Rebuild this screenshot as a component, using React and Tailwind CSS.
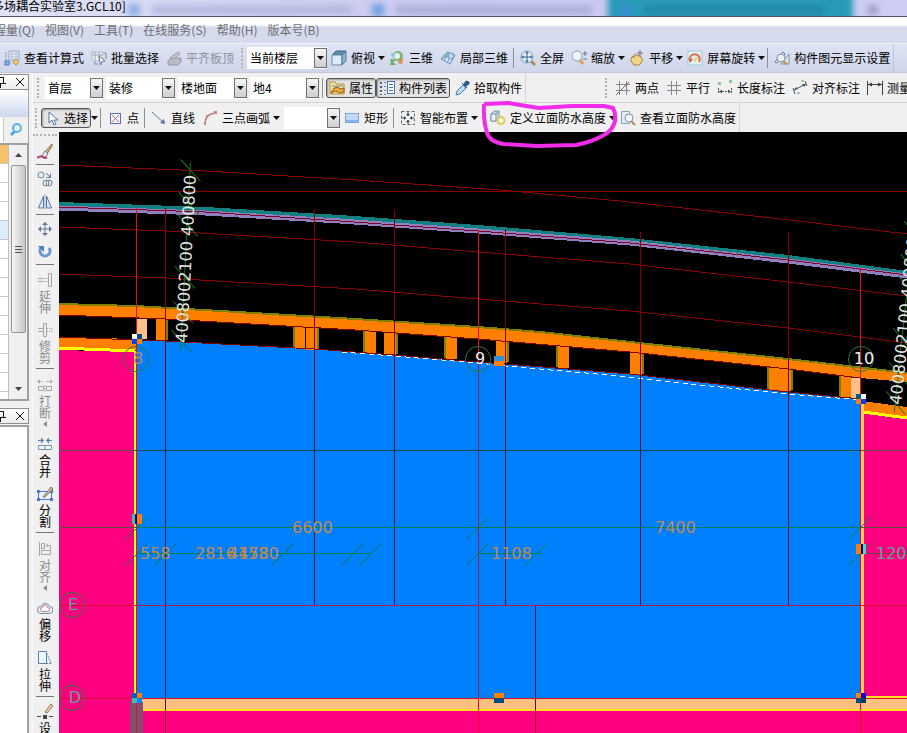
import React from 'react';
import clsx from 'clsx';

const menus = ['工程量(Q)', '视图(V)', '工具(T)', '在线服务(S)', '帮助(H)', '版本号(B)'];

/* 16x16 toolbar glyphs */
const icons = {
    formula: (
        <>
            <path d="M5 1h10v9H5z" fill="#e8eef8" stroke="#9aa8c4" />
            <path d="M5 4h10M5 7h10M8 1v9M12 1v9" stroke="#b0bcd0" />
            <path d="M2 2v11h5" fill="none" stroke="#808a9c" strokeDasharray="2 1" />
            <rect x="1" y="11" width="4" height="4" fill="#8fb4e8" stroke="#4b76b8" />
            <path d="M12 9l3 3-3 3-3-3z" fill="#f3c77d" stroke="#c08a30" />
        </>
    ),
    batch: (
        <>
            <path d="M1 2h10v9H1z" fill="#eef2f8" stroke="#9aa4b8" strokeDasharray="2 1" />
            <path d="M1 5h10M4 2v12M8 2v9" stroke="#9aa4b8" />
            <path d="M8 6l6 5-3 .5L9.500 15z" fill="#fff" stroke="#6c7a90" />
            <path d="M12 3h3v6M3 14h4" fill="none" stroke="#7b8aa6" />
        </>
    ),
    slab: (
        <>
            <path d="M2 11l4-3h9v4l-3 3H2z" fill="#b9bcc4" stroke="#9498a2" />
            <path d="M4 8l8-6 2 2-7 5z" fill="#c8cad0" stroke="#9498a2" />
        </>
    ),
    cube: (
        <>
            <path d="M1 5l4-4h10l-4 4z" fill="#5d8fae" stroke="#3d6685" />
            <path d="M1 5h10v10H1z" fill="#dcecf8" stroke="#6b8ba5" />
            <path d="M11 5l4-4v10l-4 4z" fill="#8fb4d0" stroke="#4f7896" />
        </>
    ),
    orbit: (
        <>
            <circle cx="9" cy="6" r="5" fill="#7ab87a" />
            <circle cx="8" cy="6" r="3" fill="#e8f2ea" />
            <path d="M1 9l6 1-3 2 3 3H1l1-3z" fill="#63ad5c" />
            <path d="M11 8l4 2-2 1 1 4-3-2-2 1z" fill="#d98d4a" />
            <circle cx="4" cy="5" r="2" fill="#8dc5e0" />
        </>
    ),
    local3d: (
        <>
            <path d="M1 9l6-7 8 3-5 9z" fill="#cfe3f3" stroke="#6c97bc" />
            <path d="M4 5.500l8 3.500M8 3l-4 8M12 4l-5 9M2 9l6-5" stroke="#6c97bc" fill="none" />
            <circle cx="11" cy="6" r="3" fill="#b8d5ec" stroke="#6c97bc" />
        </>
    ),
    fullscreen: (
        <>
            <path d="M11 11l4 4" stroke="#b9824a" strokeWidth="2.500" />
            <circle cx="7" cy="7" r="6" fill="#e6f1fa" stroke="#7291b0" />
            <path d="M7 2v10M2 7h10" stroke="#35649a" />
            <path d="M7 1.500l2 2H5zM7 12.500l2-2H5zM1.500 7l2-2v4zM12.500 7l-2-2v4z" fill="#35649a" />
        </>
    ),
    zoom: (
        <>
            <path d="M9 10l3 4" stroke="#dca050" strokeWidth="3" />
            <circle cx="6" cy="6" r="5" fill="#edf4fa" stroke="#8ba1b5" />
            <path d="M14 1v5M12 3.500h4M12 9h4" stroke="#5c7998" />
        </>
    ),
    pan: (
        <>
            <path d="M2 8l2-2 1 2V5l2-1 1 2 2-1 3 3v4l-3 3H5l-3-4z" fill="#f2d28b" stroke="#a88243" />
            <path d="M11 0v7M8 3h6" stroke="#5f6c7e" />
        </>
    ),
    rotateView: (
        <>
            <rect x="1" y="1" width="14" height="14" fill="#e4f4ec" stroke="#9dcbe0" />
            <path d="M3 8A5 5 0 1 1 12 12" fill="none" stroke="#dc6a58" strokeWidth="2" />
            <path d="M1 8l5 1-3 4z" fill="#d2604f" />
            <path d="M7 8l4-2v4l-4 2z" fill="#e5d38e" />
        </>
    ),
    display: (
        <>
            <path d="M7 14h8V4z" fill="#dce6f1" stroke="#7f93aa" />
            <path d="M1 12l8-10 2 2-8 9z" fill="#f0f4f8" stroke="#5e7794" />
            <circle cx="7" cy="8" r="4" fill="#e6f3fb" stroke="#7f93aa" />
            <path d="M9 11l4 3" stroke="#c88b3f" strokeWidth="2" />
        </>
    ),
    property: (
        <>
            <path d="M1 2h5l1 2h8v10H1z" fill="#fbe7a5" stroke="#b98b2d" />
            <path d="M3 6h11" stroke="#5f82b5" />
            <path d="M5 8l4-1 2 2 4-1v4l-5 1-3-2-5 2z" fill="#e8a33b" stroke="#9a5d13" />
        </>
    ),
    list: (
        <>
            <path d="M2 2v13" stroke="#3a5d94" strokeWidth="2" strokeDasharray="2 2" />
            <path d="M5 2.500h2M5 6.500h2M5 10.500h2M5 14.500h2" stroke="#6a86b0" />
            <rect x="8.500" y="1.500" width="7" height="12" fill="#fff" stroke="#4a76b8" />
            <path d="M10 4.500h4M10 7.500h4M10 10.500h4" stroke="#4a76b8" />
        </>
    ),
    pick: (
        <>
            <path d="M2 15l1-4 6-6 3 3-6 6z" fill="#bcdcf5" stroke="#4d7ba8" />
            <path d="M8 3l5 5M10 4l2-3 3 1v2l-3 2z" fill="#2f5d94" stroke="#2f5d94" />
        </>
    ),
    twoPoint: (
        <>
            <path d="M4.500 1v14M11.500 1v14M1 4.500h14M1 10.500h14" stroke="#8b8592" />
            <path d="M1 15L14 2" stroke="#775f66" />
        </>
    ),
    parallel: <path d="M5.500 1v14M10.500 1v14M1 5.500h14M1 10.500h14" stroke="#8b8592" />,
    lengthDim: (
        <>
            <path d="M1 2h3v3H1zM12 0h3v3h-3z" fill="#8cc79a" />
            <path d="M1.500 8v6M14.500 8v6M2 11.500h12" stroke="#4b5460" strokeDasharray="2 1" />
            <path d="M2 11.500l3-2v4zM14 11.500l-3-2v4z" fill="#4b5460" />
        </>
    ),
    alignDim: (
        <>
            <path d="M3 14L1 8M15 6l-2-5M2 10l12-6" stroke="#4b5460" />
            <path d="M2 10l4-1-2-2zM14 4l-4 0 2 3z" fill="#4b5460" />
            <path d="M5 12h3v2H5zM9 0h3v2H9z" fill="#9bd0a6" />
        </>
    ),
    measure: (
        <>
            <path d="M.5 1v14M15.500 1v14M1 4.500h14" stroke="#3c3c3c" />
            <path d="M1 4.500l4-2v4zM15 4.500l-4-2v4z" fill="#3c3c3c" />
        </>
    ),
    cursor: <path d="M5 2v11l3-3 2 5 2-1-2-4h4z" fill="#fff" stroke="#54779e" />,
    point: (
        <>
            <rect x="3.500" y="3.500" width="10" height="10" fill="#f4f4ff" stroke="#5b6fb5" />
            <path d="M5 5l7 7M12 5l-7 7" stroke="#b36f85" />
        </>
    ),
    line: (
        <>
            <path d="M1 2l12 11" stroke="#54779e" />
            <path d="M14 14l-5-1 4-4z" fill="#54779e" />
        </>
    ),
    arc: (
        <>
            <path d="M3 14Q3 4 13 3" fill="none" stroke="#b9757a" strokeWidth="1.500" />
            <path d="M2 12h2v3H2zM4 5h2v3H4zM12 1h3v3h-3z" fill="#c8858a" />
        </>
    ),
    rect: (
        <>
            <rect x="1.500" y="3.500" width="13" height="9" fill="#c1d8f8" stroke="#7f9fd5" />
            <path d="M2 10h12v2H2z" fill="#8cb1ec" />
        </>
    ),
    smart: (
        <>
            <path d="M1.500 1.500h13v13h-13z" fill="none" stroke="#5d6672" strokeDasharray="3 2" />
            <path d="M8 2v4M8 10v4M2 8h4M10 8h4" stroke="#333e50" />
            <path d="M8 6L6 4h4zM8 10l-2 2h4zM6 8L4 6v4zM10 8l2-2v4z" fill="#333e50" />
        </>
    ),
    waterproof: (
        <>
            <path d="M1 4l3-3h5v7l-3 3H1z" fill="#c5dbea" stroke="#7893a9" />
            <path d="M1 4h5v7H1zM6 4l3-3" fill="#eaf3f9" stroke="#7893a9" />
            <circle cx="11" cy="10.500" r="3.500" fill="#fffbe0" stroke="#dccb5c" strokeWidth="2" />
        </>
    ),
    viewHeight: (
        <>
            <path d="M1.500 1.500h8v12h-8z" fill="#e1ebf3" stroke="#8ba4b8" />
            <path d="M11 11l4 4" stroke="#b58a4c" strokeWidth="2" />
            <circle cx="9" cy="8" r="4" fill="#f2f8fc" stroke="#7e92a6" />
        </>
    ),
    brush: (
        <>
            <path d="M15 0L8 8l2 2 5-8z" fill="#d8b477" stroke="#8b6b45" />
            <path d="M8 7l3 3-3 3H4z" fill="#e8edf4" stroke="#6f7d92" />
            <path d="M0 14q4-3 6-1t4 0" fill="none" stroke="#b04a72" strokeWidth="2" />
        </>
    ),
    copy: (
        <>
            <circle cx="4" cy="4" r="3" fill="#e4eef7" stroke="#6d8aa8" />
            <circle cx="9" cy="12" r="3" fill="none" stroke="#6d7c8c" />
            <circle cx="12" cy="12" r="3" fill="none" stroke="#6d7c8c" />
            <path d="M9 2l4 4M13.500 2.500V6.500H9.500" fill="none" stroke="#4f78a8" />
        </>
    ),
    mirror: (
        <>
            <path d="M6.500 2v12h-5zM9.500 2v12h5z" fill="#dce9f6" stroke="#58789e" />
            <path d="M8 0v16" stroke="#9ab0c8" />
        </>
    ),
    move: (
        <>
            <path d="M8 2v12M2 8h12" stroke="#5f7896" />
            <path d="M8 1l3 3H5zM8 15l3-3H5zM1 8l3-3v6zM15 8l-3-3v6z" fill="#5f7896" />
        </>
    ),
    rotate: (
        <>
            <path d="M12 4A5 5 0 1 1 4 4" fill="none" stroke="#6c96d0" strokeWidth="3" />
            <path d="M1 2h6v6z" fill="#4d7ec0" />
        </>
    ),
    extend: (
        <>
            <path d="M11.500 1.500h3v13h-3z" fill="#eee" stroke="#a5a5a5" />
            <path d="M1 6.500h5M1 9.500h5" stroke="#a5a5a5" />
            <path d="M6 6.500h5M6 9.500h5" stroke="#a5a5a5" strokeDasharray="1 1" />
        </>
    ),
    trim: (
        <>
            <path d="M6.500 1.500h3v13h-3z" fill="#eee" stroke="#a5a5a5" />
            <path d="M1 6.500h6M1 9.500h6" stroke="#a5a5a5" />
            <path d="M10 6.500h5v3h-5" fill="none" stroke="#a5a5a5" strokeDasharray="1 1" />
        </>
    ),
    breakUp: (
        <>
            <path d="M1.500 9.500h5v4h-5zM9.500 9.500h5v4h-5z" fill="#eee" stroke="#a5a5a5" />
            <path d="M2 4.500h4M10 4.500h4M8 8v7" stroke="#a5a5a5" strokeDasharray="2 1" />
            <path d="M0 4.500l3-2v4zM16 4.500l-3-2v4z" fill="#a5a5a5" />
        </>
    ),
    merge: (
        <>
            <path d="M1.500 9.500h13v4h-13z" fill="#f2f6fa" stroke="#7a8fa8" />
            <path d="M8 9.500v4" stroke="#7a8fa8" />
            <path d="M1 4.500h5M10 4.500h5" stroke="#5882b8" />
            <path d="M7 4.500l-3-3v6zM9 4.500l3-3v6z" fill="#5882b8" />
        </>
    ),
    split: (
        <>
            <path d="M1.500 5.500h13v8h-13z" fill="#eef4ff" stroke="#5074d0" />
            <path d="M0 4h3v3H0zM0 12h3v3H0zM13 12h3v3h-3zM13 4h3v3h-3z" fill="#5074d0" />
            <path d="M6 11l8-10 2 2-8 8z" fill="#d9bd88" stroke="#777" />
        </>
    ),
    alignTo: (
        <>
            <path d="M2.500 1v14M4.500 2.500v5h3v-5z" fill="#eee" stroke="#a5a5a5" />
            <path d="M4.500 9.500h9v4h-9zM13.500 9V4.500h-4M11 2.500l-2 2 2 2" fill="none" stroke="#a5a5a5" />
        </>
    ),
    offset: (
        <>
            <path d="M4 13.500a3.500 3.500 0 0 1 0-7 4.500 4.500 0 0 1 8.500 0 3.500 3.500 0 0 1 0 7z" fill="#eaf0f6" stroke="#6e89a6" />
            <path d="M5.500 11.500a2 2 0 0 1 0-4 2.500 2.500 0 0 1 5 0 2 2 0 0 1 0 4z" fill="#fff" stroke="#c77b82" />
        </>
    ),
    stretch: (
        <>
            <path d="M9.500 13.500h-8v-12h8z" fill="#edf5fc" stroke="#5b83a8" />
            <path d="M9.500 3l5 10.500h-5" fill="none" stroke="#5b83a8" strokeDasharray="2 1" />
        </>
    ),
    grip: (
        <>
            <path d="M0 12.500h16" stroke="#444" strokeDasharray="4 2" />
            <path d="M6 11h4v4H6z" fill="#444" />
            <path d="M8 8l6-8 2 2-6 7z" fill="#e5d3a2" stroke="#9a7050" />
        </>
    ),
};

function Icon({ name }) {
    return (
        <svg viewBox="0 0 16 16" className="size-4 shrink-0" fill="none" aria-hidden="true">
            {icons[name]}
        </svg>
    );
}

function Caret({ className }) {
    return (
        <svg viewBox="0 0 7 4" className={clsx('w-[7px] h-1 shrink-0', className)} aria-hidden="true">
            <path d="M0 0h7L3.500 4z" fill="#111" />
        </svg>
    );
}

function Tool({ icon, label, caret, pressed, disabled, children }) {
    return (
        <button
            type="button"
            disabled={disabled}
            className={clsx(
                'relative flex items-center gap-1 shrink-0 whitespace-nowrap h-5',
                pressed ? 'border border-[#555] rounded-[3px] bg-[#e4e4e4] shadow-[inset_1px_1px_2px_#999] px-[2px]' : 'pl-1',
                !pressed && !caret && 'pr-[3px]',
                disabled ? 'text-[#8b90a0]' : 'text-black'
            )}
        >
            <Icon name={icon} />
            {label}
            {caret && <Caret className="-ml-px" />}
            {children}
        </button>
    );
}

function Combo({ label, value, className }) {
    return (
        <div className={clsx('relative shrink-0 h-[22px] bg-white', className)}>
            <select aria-label={label} defaultValue={value} className="appearance-none w-full h-full pl-[3px] pr-4 bg-transparent outline-none">
                <option>{value}</option>
            </select>
            <span className="absolute right-0 top-px w-[13px] h-5 border border-[#707070] bg-linear-to-b from-[#f6f6f6] to-[#cfcfcf] flex items-center justify-center pointer-events-none">
                <Caret />
            </span>
        </div>
    );
}

const Divider = () => <span className="w-px h-5 mx-[2px] bg-[#8b8f98] shrink-0" />;
const Grip = ({ className = 'mx-1' }) => <span className={clsx('h-5 border-l-2 border-dotted border-[#b4b4b8] shrink-0', className)} />;

function TitleBar() {
    return (
        <header className="relative h-4 shrink-0 overflow-hidden bg-linear-to-r from-[#dfe3f4] via-[#c9c8f0] to-[#cdccf4]">
            <div className="absolute inset-0 flex items-center blur-[3px] pl-[128px] pt-1">
                <span className="size-3 shrink-0 bg-[#8fb0e4] mr-3" />
                <span className="h-2 w-[200px] shrink-0 bg-[#b2b6de]" />
                <span className="size-3 shrink-0 bg-[#6f9fe4] ml-5 mr-3" />
                <span className="h-2 w-[196px] shrink-0 bg-[#a8aeda]" />
                <span className="h-8 w-[245px] shrink-0 ml-4 bg-[#279bb8] flex items-center pl-3">
                    <span className="size-3 bg-[#3a8fd0] mr-3" />
                    <span className="h-2 w-[180px] bg-[#2286a4]" />
                </span>
                <span className="size-2 shrink-0 ml-4 bg-[#8f8db8]" />
            </div>
            <h1 className="relative -ml-2 text-xs leading-3 whitespace-nowrap">多场耦合实验室3.GCL10]</h1>
        </header>
    );
}

function PanelHeader() {
    return (
        <div className="h-4 shrink-0 border border-l-0 border-[#8f8f8f] bg-linear-to-b from-white to-[#ececec] flex items-center justify-end gap-2 pr-1">
            <button type="button" aria-label="固定" className="w-2 h-3">
                <svg viewBox="0 0 8 12" className="w-2 h-3">
                    <path d="M0 1.500h4M3.500 1v6M0 7.500h6M.5 8v4" stroke="#111" fill="none" />
                </svg>
            </button>
            <button type="button" aria-label="关闭" className="size-2">
                <svg viewBox="0 0 8 8" className="size-2">
                    <path d="M0 0l8 8M8 0L0 8" stroke="#111" fill="none" />
                </svg>
            </button>
        </div>
    );
}

const rowColors = ['bg-[#f5c26b]', '', '', '', 'bg-[#dcecfb]', '', '', '', '', '', '', '', ''];

function SidePanel() {
    return (
        <aside className="w-[29px] shrink-0 flex flex-col pt-px bg-[#f0f0f0]">
            <PanelHeader />
            <div className="h-[27px] shrink-0 border-r border-[#a8a8a8] bg-linear-to-b from-white via-[#e6ecf8] to-[#ccd8ee]" />
            <div className="h-[26px] shrink-0 flex items-center border-r border-[#a8a8a8]">
                <input aria-label="搜索" className="w-1 h-6 bg-white border-r border-[#c4c4c4] outline-none" />
                <button type="button" aria-label="查找" className="ml-1 size-4">
                    <svg viewBox="0 0 16 16" className="size-4">
                        <path d="M3 13l4-4" stroke="#4a9fdc" strokeWidth="2.500" />
                        <circle cx="9" cy="6" r="4" fill="#e4f4fe" stroke="#5cb0e6" strokeWidth="2" />
                    </svg>
                </button>
            </div>
            <div className="h-[258px] shrink-0 flex border-r-2 border-y-2 border-[#a0a0a0] bg-white overflow-hidden">
                <div className="w-[9px] border-r border-[#c0c0c0]">
                    {rowColors.map((color, index) => (
                        <div key={index} className={clsx('h-[19px] border-b border-[#c8c8c8]', color)} />
                    ))}
                </div>
                <div className="flex-1 flex flex-col items-center bg-[#f0f0f0]">
                    <svg viewBox="0 0 7 4" className="w-[7px] h-1 my-2"><path d="M0 4h7L3.500 0z" fill="#444" /></svg>
                    <div className="w-[15px] h-[168px] rounded-xs border border-[#959595] bg-linear-to-r from-[#f6f6f6] to-[#c6c6c6] flex flex-col items-center justify-center gap-[2px]">
                        <span className="w-[7px] h-px bg-[#555]" />
                        <span className="w-[7px] h-px bg-[#555]" />
                        <span className="w-[7px] h-px bg-[#555]" />
                    </div>
                    <svg viewBox="0 0 7 4" className="w-[7px] h-1 mt-auto mb-2"><path d="M0 0h7L3.500 4z" fill="#444" /></svg>
                </div>
            </div>
            <div className="h-[7px] shrink-0" />
            <PanelHeader />
            <div className="flex-1 mt-px border-r-2 border-t-2 border-[#a0a0a0] bg-white" />
        </aside>
    );
}

const editTools = [
    [{ icon: 'brush', name: '格式刷' }],
    [{ icon: 'copy', name: '复制' }, { icon: 'mirror', name: '镜像' }],
    [{ icon: 'move', name: '移动' }, { icon: 'rotate', name: '旋转' }],
    [{ icon: 'extend', label: '延伸', disabled: true }, { icon: 'trim', label: '修剪', disabled: true }],
    [{ icon: 'breakUp', label: '打断', disabled: true, caret: true }, { icon: 'merge', label: '合并' }, { icon: 'split', label: '分割' }],
    [{ icon: 'alignTo', label: '对齐', disabled: true, caret: true }, { icon: 'offset', label: '偏移' }, { icon: 'stretch', label: '拉伸' }],
    [{ icon: 'grip', label: '设' }],
];

function EditBar() {
    return (
        <nav className="w-[26px] shrink-0 overflow-hidden bg-[#f0f0f0] flex flex-col items-center pr-[2px] pt-[2px]">
            <span className="w-6 mb-1 border-t-2 border-dotted border-[#b4b4b8] shrink-0" />
            {editTools.map((group, index) => (
                <React.Fragment key={index}>
                    {index > 0 && <span className="w-[18px] h-px mt-px mb-[2px] bg-[#777] shrink-0" />}
                    {group.map((tool) => (
                        <button
                            key={tool.icon}
                            type="button"
                            aria-label={tool.name}
                            disabled={tool.disabled}
                            className={clsx(
                                'flex flex-col items-center shrink-0',
                                !tool.label && 'h-[23px] justify-center',
                                tool.label && (tool.caret ? 'h-[60px] pt-[6px]' : 'h-[50px] pt-[5px]'),
                                tool.disabled ? 'text-[#8a8a8a]' : 'text-black'
                            )}
                        >
                            <Icon name={tool.icon} />
                            {tool.label && <span className="w-3 mt-[2px] leading-3 text-xs break-all">{tool.label}</span>}
                            {tool.caret && (
                                <svg viewBox="0 0 4 6" className="w-1 h-[6px] mt-[2px]"><path d="M4 0v6L0 3z" fill="#8a8a8a" /></svg>
                            )}
                        </button>
                    ))}
                </React.Fragment>
            ))}
        </nav>
    );
}

/* piers between the two facade walls: [x, top, width, bottom, side of the olive edge] */
const piers = [
    [156, 319, 10, 341, 'r'],
    [295, 326, 10, 348, 'l'],
    [306, 327, 11, 350, 'r'],
    [365, 331, 11, 353, 'l'],
    [384, 332, 12, 355, 'r'],
    [446, 337, 11, 359, 'l'],
    [496, 341, 11, 363, 'r'],
    [558, 346, 11, 368, 'l'],
    [630, 353, 12, 375, 'r'],
    [769, 367, 10, 390, 'l'],
    [779, 368, 12, 391, 'r'],
    [841, 375, 10, 398, 'l'],
];

const redCurves = [
    'M59 165L205 171L355 180L500 190L620 201L790 220L907 234',
    'M59 191.500H907',
    'M59 227L165 231L355 242L478 252L630 264L788 282L907 296',
    'M59 274L165 278L355 289L478 299L630 311L788 328L907 343',
];

const darkAxes = [
    [165, 208, 733],
    [314, 209, 605],
    [394, 210, 605],
    [505, 229, 605],
    [640, 232, 605],
    [788, 232, 605],
    [535, 605, 733],
];

const ticks = [
    [137, 527], [478, 527], [860, 527], [137, 553], [166, 553], [283, 553], [353, 553], [371, 553], [478, 553], [536, 553], [860, 553],
];

/* selection grips: centre and the four quadrant colours */
const handles = [
    [137, 339, '#fff', '#004c80', '#0040ff', '#ff8000'],
    [137, 519, '#40c0a0', '#ff8000', '#40c0a0', '#ff8000'],
    [137, 698, '#0060c0', '#ff8000', '#40c0b0', '#0080ff'],
    [499, 361, '#3090e0', '#3090e0', '#ff8000', '#ff8000'],
    [499, 698, '#ff8000', '#ff8000', '#004c80', '#004c80'],
    [861, 399, '#005c80', '#fff', '#ff8000', '#0040ff'],
    [861, 549, '#ff8000', '#40e0c0', '#ff8000', '#40e0c0'],
    [861, 698, '#ff8000', '#0000d0', '#004c80', '#003c60'],
];

function Bubble({ x, y, label, tx, fill }) {
    return (
        <g>
            <circle cx={x} cy={y} r="12.500" fill="none" stroke="#2c7838" />
            <text x={tx} y={y + 5} fill={fill} textAnchor="middle">{label}</text>
        </g>
    );
}

function ElevationDims({ x, y, angle }) {
    return (
        <g transform={`translate(${x} ${y}) rotate(${angle})`} fill="#e4e4e4">
            <path d="M-8 -6H180" stroke="#1a7a1a" />
            {[0, 29, 64, 116, 138, 171].map((d) => (
                <path key={d} d={`M${d - 9} 5L${d + 12} -16`} stroke="#1a7a1a" />
            ))}
            <text x="0" y="0">4008002100 400800</text>
        </g>
    );
}

function Drawing() {
    return (
        <svg
            viewBox="59 132 848 601"
            preserveAspectRatio="xMinYMin slice"
            className="block w-full h-full bg-black font-['DejaVu_Sans',sans-serif] text-[16px]"
            role="img"
            aria-label="平面图"
        >
            <g shapeRendering="crispEdges">
                <path d="M59 350L136 352V733H59zM863 413L907 419V733H863z" fill="#ff0080" />
                <path d="M136 710H907V733H136z" fill="#ff0080" />
                <path d="M136 339L165 341L314 349L394 355L478 362L505 364L630 374L788 392L861 399V698H136z" fill="#0080ff" />
                <path d="M136 699H907V709H136z" fill="#ffc080" />
                <path d="M136 710H907M866 697H907" stroke="#ffe020" strokeWidth="2" fill="none" />

                {/* axis grid */}
                <g fill="none" stroke="#8a0000">
                    {redCurves.map((d) => <path key={d} d={d} />)}
                </g>

                {/* outer slab edge */}
                <path d="M59 204L205 209L340 217L478 227L630 240L788 257L907 273" fill="none" stroke="#108080" strokeWidth="4" />
                <path d="M59 208L205 213L340 221L478 231L630 243L788 261L907 276" fill="none" stroke="#9080c0" strokeWidth="5" />
                <path d="M59 207L205 212L340 221L478 231L630 243L788 260L907 275" fill="none" stroke="#800020" />

                {/* facade walls */}
                <path d="M59 303L136 305L355 318L478 326L540 331L630 341L788 358L907 372V382L860 378L788 369L630 352L478 339L355 330L165 319L59 315z" fill="#ff8000" />
                <path d="M59 304L136 306L355 319L478 327L540 332L630 342L788 359L907 373" fill="none" stroke="#808000" strokeWidth="2" />
                <path d="M59 337L136 339V350L59 347zM862 401L907 407V417L862 411z" fill="#ff8000" />
                <path d="M59 348L135 351M863 412L907 418" stroke="#ffff00" strokeWidth="3" />
                {piers.map(([x, top, w, bottom, side]) => (
                    <g key={x}>
                        <path d={`M${x} ${top}h${w}V${bottom}h${-w}z`} fill="#ff8000" />
                        <path d={`M${side === 'l' ? x - 1 : x + w + 1} ${top}V${bottom - 1}`} stroke="#808000" strokeWidth="2" />
                    </g>
                ))}
                <path d="M137 319h10v20h-10zM851 378h9v20h-9z" fill="#ffc08c" />
                <path d="M59 315L165 319L355 330L478 339L630 352L788 369L860 378" fill="none" stroke="#800000" />
                <path d="M59 337L165 341L314 349L394 355L478 362L505 364L630 374L788 392L861 399" fill="none" stroke="#800000" />
                <path d="M342 352L394 356L478 363L505 366L620 376L700 385L788 394L861 400" fill="none" stroke="#fff" strokeDasharray="5 4" />

                <path d="M135 351V698" stroke="#ffff00" strokeWidth="2" />
                <path d="M862 403V698" stroke="#ffd060" strokeWidth="3" />
                <path d="M130 702h13V733h-13z" fill="#80506c" />

                {/* axes */}
                {darkAxes.map(([x, from, to]) => (
                    <g key={x}>
                        <path d={`M${x + 0.5} ${from}V${to}`} stroke="#800000" />
                        <path d={`M${x + 0.5} ${Math.max(from, 400)}V${Math.min(to, 698)}`} stroke="#481038" />
                    </g>
                ))}
                <path d="M136.500 208V733M478.500 230V733M860.500 268V733" stroke="#e01020" />
                <path d="M478.500 364V697" stroke="#a01c48" />
                <path d="M59 450.500H907M59 527.500H907" stroke="#604c40" />
                <path d="M137 450.500H861" stroke="#104850" />
                <path d="M137 527.500H861M137 553.500H371M478 553.500H541" stroke="#008050" />
                <path d="M862 553.500H907" stroke="#604c40" />
                <path d="M59 605.500H907M59 698.500H907" stroke="#d81030" />
                <path d="M137 605.500H861" stroke="#b01c48" />
            </g>

            {ticks.map(([x, y]) => (
                <path key={`${x}-${y}`} d={`M${x - 11} ${y + 12}L${x + 11} ${y - 10}`} stroke="#00803c" />
            ))}

            <g fill="#c08850">
                <text x="292" y="533">6600</text>
                <text x="655" y="533">7400</text>
                <text x="140" y="559">558</text>
                <text x="195" y="559">2816</text>
                <text x="228" y="559">4458</text>
                <text x="238" y="559">1730</text>
                <text x="491" y="559">1108</text>
                <text x="876" y="559" fill="#60a098">1200</text>
            </g>

            <Bubble x={136} y={359} label="8" tx={138} fill="#b08868" />
            <Bubble x={478} y={359} label="9" tx={480} fill="#f0f0f0" />
            <Bubble x={861} y={359} label="10" tx={864} fill="#f0f0f0" />
            <Bubble x={72} y={605} label="E" tx={73} fill="#60a098" />
            <Bubble x={72} y={698} label="D" tx={75} fill="#60a098" />

            <ElevationDims x={187} y={343} angle={-87} />
            <ElevationDims x={901} y={405} angle={-84} />

            {handles.map(([x, y, a, b, c, d]) => (
                <g key={`${x}-${y}`} shapeRendering="crispEdges">
                    <rect x={x - 5} y={y - 5} width="5" height="5" fill={a} />
                    <rect x={x} y={y - 5} width="5" height="5" fill={b} />
                    <rect x={x - 5} y={y} width="5" height="5" fill={c} />
                    <rect x={x} y={y} width="5" height="5" fill={d} />
                </g>
            ))}
            <path d="M135 514h2v10h-2zM861 544h2v10h-2z" fill="#0000a0" />
        </svg>
    );
}

export default function App() {
    return (
        <div className="h-screen flex flex-col overflow-hidden bg-[#f0f0f0] text-xs text-black font-['Noto_Sans_CJK_SC',sans-serif]">
            <TitleBar />
            <nav className="h-[27px] shrink-0 border-t border-[#4c5470] bg-linear-to-b from-white from-30% to-[#d5dbec] to-40% flex items-center gap-[10px] overflow-hidden text-[#6d6d72]">
                {menus.map((menu, index) => (
                    <button key={menu} type="button" className={clsx('shrink-0 whitespace-nowrap', index === 0 && '-ml-[18px]')}>
                        {menu}
                    </button>
                ))}
            </nav>

            <div className="h-[30px] shrink-0 border-y border-t-[#eef1f9] border-b-[#c3c9da] bg-linear-to-b from-[#dfe4f3] to-[#cfd6ea] flex items-center overflow-hidden">
                <Tool icon="formula" label="查看计算式" />
                <Tool icon="batch" label="批量选择" />
                <Tool icon="slab" label="平齐板顶" disabled />
                <Grip />
                <Combo label="楼层范围" value="当前楼层" className="w-20" />
                <Tool icon="cube" label="俯视" caret />
                <Tool icon="orbit" label="三维" />
                <Tool icon="local3d" label="局部三维" />
                <Divider />
                <Tool icon="fullscreen" label="全屏" />
                <Tool icon="zoom" label="缩放" caret />
                <Tool icon="pan" label="平移" caret />
                <Tool icon="rotateView" label="屏幕旋转" caret />
                <Divider />
                <Tool icon="display" label="构件图元显示设置" />
                <span className="h-full border-l border-[#bcc4d8]" />
            </div>

            <div className="flex-1 min-h-0 flex">
                <SidePanel />
                <main className="flex-1 min-w-0 flex flex-col ml-[3px] border-l border-[#fafafa]">
                    <div className="h-[30px] shrink-0 border-b border-[#d4d4d4] flex items-center overflow-hidden">
                        <Grip />
                        <div className="flex gap-[3px] shrink-0 pl-[2px]">
                            <Combo label="楼层" value="首层" className="w-[58px]" />
                            <Combo label="构件类型" value="装修" className="w-[69px]" />
                            <Combo label="构件" value="楼地面" className="w-[69px]" />
                            <Combo label="名称" value="地4" className="w-[69px]" />
                        </div>
                        <span className="w-px h-5 mx-[3px] bg-[#8b8f98] shrink-0" />
                        <Tool icon="property" label="属性" pressed />
                        <Tool icon="list" label="构件列表" pressed />
                        <Tool icon="pick" label="拾取构件" />
                        <span className="w-[76px] h-full border-l border-[#d4d4d4] shrink-0" />
                        <Grip />
                        <Tool icon="twoPoint" label="两点" />
                        <Tool icon="parallel" label="平行" />
                        <Tool icon="lengthDim" label="长度标注" />
                        <Tool icon="alignDim" label="对齐标注" />
                        <Tool icon="measure" label="测量距离" />
                    </div>
                    <div className="h-[29px] shrink-0 flex items-center">
                        <Grip className="ml-[2px] mr-1" />
                        <Tool icon="cursor" label="选择" pressed />
                        <button type="button" aria-label="选择方式"><Caret /></button>
                        <Divider />
                        <Tool icon="point" label="点" />
                        <Divider />
                        <Tool icon="line" label="直线" />
                        <Tool icon="arc" label="三点画弧" caret />
                        <Combo label="画弧方式" value="" className="w-14 ml-1" />
                        <Tool icon="rect" label="矩形" />
                        <Divider />
                        <Tool icon="smart" label="智能布置" caret />
                        <span className="w-2 shrink-0" />
                        <Tool icon="waterproof" label="定义立面防水高度" caret>
                            {/* hand-drawn marker round the command */}
                            <svg viewBox="0 0 140 52" className="absolute -left-1 -top-2 w-[140px] h-[52px] z-10 pointer-events-none" aria-hidden="true">
                                <path
                                    d="M2 4L26 3L38 5L57 8L90 6L122 6L131 8Q134 14 133 21Q131 30 122 35Q110 42 94 45L55 46L22 44Q8 42 5 33Q1 20 2 4"
                                    fill="none"
                                    stroke="#f02ce8"
                                    strokeWidth="4"
                                    strokeLinejoin="round"
                                />
                            </svg>
                        </Tool>
                        <Tool icon="viewHeight" label="查看立面防水高度" />
                        <span className="h-full border-l border-[#d4d4d4]" />
                    </div>
                    <div className="flex-1 min-h-0 flex">
                        <EditBar />
                        <div className="flex-1 min-w-0 overflow-hidden">
                            <Drawing />
                        </div>
                    </div>
                </main>
            </div>
        </div>
    );
}
